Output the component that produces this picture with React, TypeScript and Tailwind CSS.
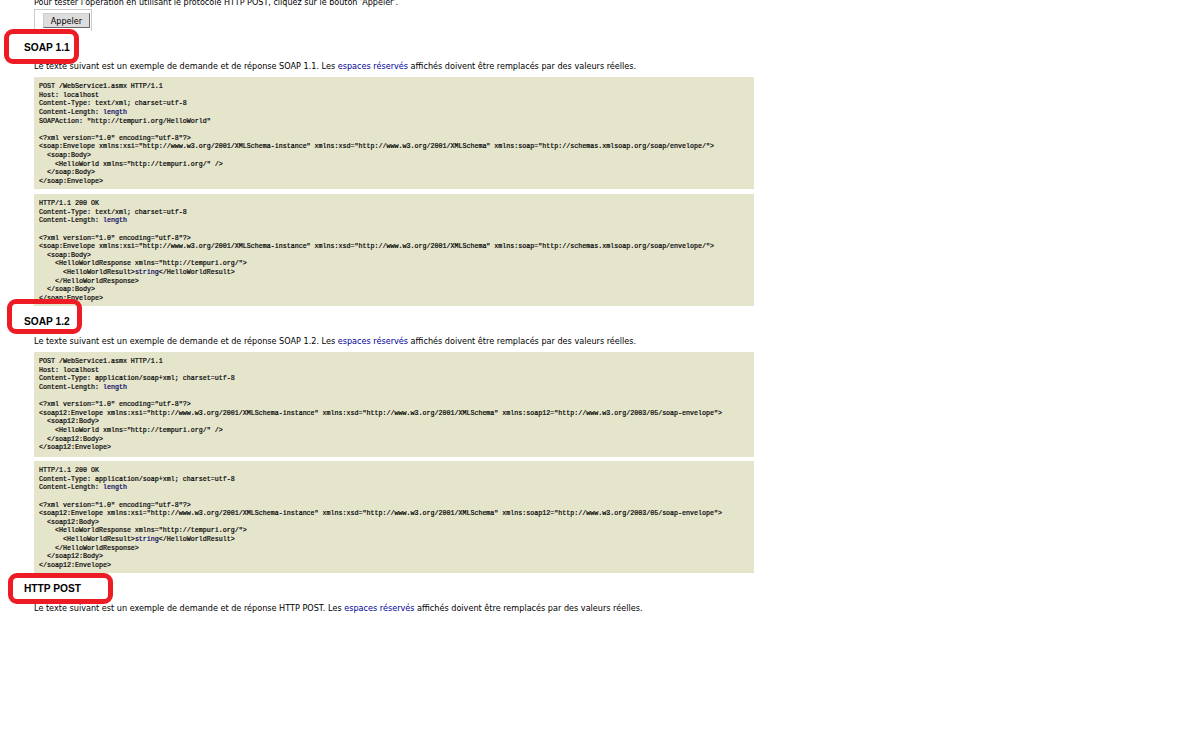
const B = ({ children }: { children: React.ReactNode }) => <span className="text-[#000099]">{children}</span>;

function Pre({ h, children }: { h: string; children: React.ReactNode }) {
  return (
    <pre className={`w-[720px] bg-[#e5e5cc] pl-[5px] pt-[5px] font-['Liberation_Mono',monospace] text-[6.67px] leading-[8.63px] text-black [-webkit-text-stroke:0.2px_#000] ${h}`}>
      {children}
    </pre>
  );
}

function Para({ kind, className }: { kind: string; className: string }) {
  return (
    <p className={`ml-[34px] font-['DejaVu_Sans',sans-serif] text-[8.12px] leading-[10px] text-black ${className}`}>
      Le texte suivant est un exemple de demande et de réponse {kind}. Les <B>espaces réservés</B> affichés doivent être remplacés par des valeurs réelles.
    </p>
  );
}

function Heading({ children, className }: { children: React.ReactNode; className: string }) {
  return <h3 className={`ml-[24px] font-['Liberation_Sans',sans-serif] text-[10.2px] font-bold leading-[12px] text-black ${className}`}>{children}</h3>;
}

function Mark({ className }: { className: string }) {
  return <div className={`absolute border-[5px] border-[#ed1c24] rounded-[9px] ${className}`} />;
}

export default function App() {
  return (
    <div className="relative h-[750px] w-[1200px] overflow-hidden bg-white">
      <p className="ml-[34px] mt-[-2px] font-['DejaVu_Sans',sans-serif] text-[8.05px] leading-[10px] text-black">
        Pour tester l'opération en utilisant le protocole HTTP POST, cliquez sur le bouton 'Appeler'.
      </p>
      <div className="ml-[34px] mt-[1px] h-[22px] w-[58px] border-l border-r border-t border-[#ccc] pl-[8px] pt-[3px]">
        <button className="block h-[15px] w-[47px] border border-[#ccc] border-b-[#666] border-r-[#666] bg-[#ddd] font-['DejaVu_Sans',sans-serif] text-[8.1px] leading-[12px] text-black">Appeler</button>
      </div>
      <Heading className="mt-[11px]">SOAP 1.1</Heading>
      <Para kind="SOAP 1.1" className="mt-[7px]" />
      <div className="ml-[34px] mt-[6px] flex flex-col gap-[5px]">
        <Pre h="h-[112px]">{`POST /WebService1.asmx HTTP/1.1
Host: localhost
Content-Type: text/xml; charset=utf-8
Content-Length: `}<B>length</B>{`
SOAPAction: "http://tempuri.org/HelloWorld"

<?xml version="1.0" encoding="utf-8"?>
<soap:Envelope xmlns:xsi="http://www.w3.org/2001/XMLSchema-instance" xmlns:xsd="http://www.w3.org/2001/XMLSchema" xmlns:soap="http://schemas.xmlsoap.org/soap/envelope/">
  <soap:Body>
    <HelloWorld xmlns="http://tempuri.org/" />
  </soap:Body>
</soap:Envelope>`}</Pre>
        <Pre h="h-[112px]">{`HTTP/1.1 200 OK
Content-Type: text/xml; charset=utf-8
Content-Length: `}<B>length</B>{`

<?xml version="1.0" encoding="utf-8"?>
<soap:Envelope xmlns:xsi="http://www.w3.org/2001/XMLSchema-instance" xmlns:xsd="http://www.w3.org/2001/XMLSchema" xmlns:soap="http://schemas.xmlsoap.org/soap/envelope/">
  <soap:Body>
    <HelloWorldResponse xmlns="http://tempuri.org/">
      <HelloWorldResult>`}<B>string</B>{`</HelloWorldResult>
    </HelloWorldResponse>
  </soap:Body>
</soap:Envelope>`}</Pre>
      </div>
      <Heading className="mt-[10px]">SOAP 1.2</Heading>
      <Para kind="SOAP 1.2" className="mt-[8px]" />
      <div className="ml-[34px] mt-[6px] flex flex-col gap-[4px]">
        <Pre h="h-[105px]">{`POST /WebService1.asmx HTTP/1.1
Host: localhost
Content-Type: application/soap+xml; charset=utf-8
Content-Length: `}<B>length</B>{`

<?xml version="1.0" encoding="utf-8"?>
<soap12:Envelope xmlns:xsi="http://www.w3.org/2001/XMLSchema-instance" xmlns:xsd="http://www.w3.org/2001/XMLSchema" xmlns:soap12="http://www.w3.org/2003/05/soap-envelope">
  <soap12:Body>
    <HelloWorld xmlns="http://tempuri.org/" />
  </soap12:Body>
</soap12:Envelope>`}</Pre>
        <Pre h="h-[112px]">{`HTTP/1.1 200 OK
Content-Type: application/soap+xml; charset=utf-8
Content-Length: `}<B>length</B>{`

<?xml version="1.0" encoding="utf-8"?>
<soap12:Envelope xmlns:xsi="http://www.w3.org/2001/XMLSchema-instance" xmlns:xsd="http://www.w3.org/2001/XMLSchema" xmlns:soap12="http://www.w3.org/2003/05/soap-envelope">
  <soap12:Body>
    <HelloWorldResponse xmlns="http://tempuri.org/">
      <HelloWorldResult>`}<B>string</B>{`</HelloWorldResult>
    </HelloWorldResponse>
  </soap12:Body>
</soap12:Envelope>`}</Pre>
      </div>
      <Heading className="mt-[10px]">HTTP POST</Heading>
      <Para kind="HTTP POST" className="mt-[8px]" />
      <Mark className="left-[4px] top-[29px] h-[35px] w-[75px]" />
      <Mark className="left-[7px] top-[299px] h-[35px] w-[75px]" />
      <Mark className="left-[8px] top-[573px] h-[31px] w-[105px]" />
    </div>
  );
}
